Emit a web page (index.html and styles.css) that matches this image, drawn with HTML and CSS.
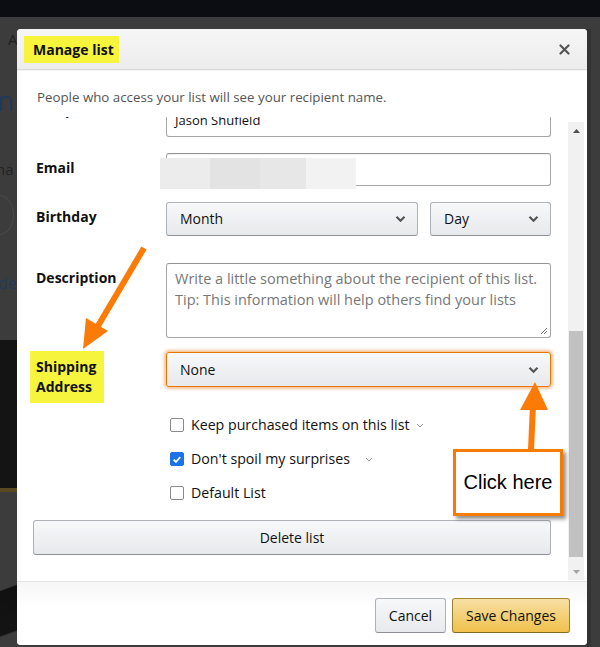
FILE: index.html
```html
<!DOCTYPE html>
<html lang="en">
<head>
<meta charset="utf-8">
<title>Manage list</title>
<link rel="stylesheet" href="styles.css">
</head>
<body>
<div class="page">
  <div class="topbar"></div>
  <div class="stage">
    <aside class="bg-left">
      <span class="bg-a">A</span>
      <span class="bg-n">n</span>
      <span class="bg-ha">ha</span>
      <span class="bg-circle"></span>
      <span class="bg-de">de</span>
      <span class="bg-img"></span>
      <span class="bg-gold"></span>
      <span class="bg-img2"></span>
    </aside>

    <section class="modal">
      <header class="modal-head">
        <h1 class="title"><span class="hl">Manage list</span></h1>
        <span class="close">
          <svg width="11" height="11" viewBox="0 0 11 11"><path d="M1.5 1.5 L9.5 9.5 M9.5 1.5 L1.5 9.5" stroke="#555" stroke-width="2.2" stroke-linecap="round"/></svg>
        </span>
      </header>

      <p class="notice">People who access your list will see your recipient name.</p>

      <div class="scroller">
        <div class="form">
          <div class="row row-first">
            <label class="lbl">Recipient</label>
            <div class="input">Jason Shufield</div>
          </div>

          <div class="row">
            <label class="lbl">Email</label>
            <div class="input input-email"></div>
          </div>

          <div class="row">
            <label class="lbl">Birthday</label>
            <div class="pair">
              <div class="select sel-month"><span>Month</span><svg class="chev" width="11" height="8" viewBox="0 0 11 8"><path d="M1.5 1.8 L5.5 5.8 L9.5 1.8" fill="none" stroke="#555" stroke-width="2.2"/></svg></div>
              <div class="select sel-day"><span>Day</span><svg class="chev" width="11" height="8" viewBox="0 0 11 8"><path d="M1.5 1.8 L5.5 5.8 L9.5 1.8" fill="none" stroke="#555" stroke-width="2.2"/></svg></div>
            </div>
          </div>

          <div class="row row-desc">
            <label class="lbl">Description</label>
            <div class="textarea">
              <span class="ph">Write a little something about the recipient of this list.<br>Tip: This information will help others find your lists</span>
              <svg class="grip" width="9" height="9" viewBox="0 0 9 9"><path d="M8 2 L2 8 M8 5 L5 8" stroke="#777" stroke-width="1"/></svg>
            </div>
          </div>

          <div class="row row-ship">
            <label class="lbl lbl-ship"><span class="hl hl-ship">Shipping<br>Address</span></label>
            <div class="select sel-ship"><span>None</span><svg class="chev" width="11" height="8" viewBox="0 0 11 8"><path d="M1.5 1.8 L5.5 5.8 L9.5 1.8" fill="none" stroke="#555" stroke-width="2.2"/></svg></div>
          </div>

          <div class="row row-opts">
            <span></span>
            <div class="opts">
              <div class="opt"><span class="cb"></span><span>Keep purchased items on this list</span><svg class="mini" width="8" height="5" viewBox="0 0 8 5"><path d="M1 1 L4 4 L7 1" fill="none" stroke="#999" stroke-width="1"/></svg></div>
              <div class="opt"><span class="cb cb-on"><svg width="13" height="13" viewBox="0 0 13 13"><path d="M3 6.8 L5.4 9.2 L10 3.8" fill="none" stroke="#fff" stroke-width="2"/></svg></span><span>Don't spoil my surprises</span><svg class="mini mini-far" width="8" height="5" viewBox="0 0 8 5"><path d="M1 1 L4 4 L7 1" fill="none" stroke="#999" stroke-width="1"/></svg></div>
              <div class="opt"><span class="cb"></span><span>Default List</span></div>
            </div>
          </div>

          <div class="btn btn-delete">Delete list</div>
        </div>

        <div class="scrollbar">
          <span class="sb-arrow"><svg width="7" height="4" viewBox="0 0 7 4"><path d="M0 4 L3.5 0 L7 4Z" fill="#505050"/></svg></span>
          <div class="sb-track"><div class="sb-thumb"></div></div>
          <span class="sb-arrow"><svg width="7" height="4" viewBox="0 0 7 4"><path d="M0 0 L3.5 4 L7 0Z" fill="#a3a3a3"/></svg></span>
        </div>
      </div>

      <footer class="modal-foot">
        <div class="btn btn-cancel">Cancel</div>
        <div class="btn btn-save">Save Changes</div>
      </footer>
    </section>

    <aside class="bg-right"></aside>
  </div>

  <svg class="annot" width="600" height="647" viewBox="0 0 600 647">
    <path d="M144 248 L95 331" stroke="#fb7b06" stroke-width="6" stroke-linecap="butt"/>
    <path d="M83 349 L86 318 L108 331 Z" fill="#fb7b06"/>
    <path d="M531 450 L533 405" stroke="#fb7b06" stroke-width="6"/>
    <path d="M535 382 L520 410 L548 410 Z" fill="#fb7b06"/>
  </svg>
  <div class="callout">Click here</div>
</div>
</body>
</html>
```

FILE: styles.css
```css
* { box-sizing: border-box; }
html, body { margin: 0; padding: 0; }
body {
  width: 600px;
  height: 647px;
  overflow: hidden;
  background: #3c3c3c;
  font-family: "Open Sans", "Liberation Sans", sans-serif;
  color: #111;
}
.page { position: relative; width: 600px; height: 647px; overflow: hidden; }
.topbar { height: 17px; background: #0b0d12; }
.stage { display: flex; height: 630px; padding-top: 12px; }

.bg-left { position: relative; width: 17px; flex: none; margin-top: -12px; overflow: hidden; }
.bg-left span { position: absolute; }
.bg-a { left: 8px; top: 12px; color: #1f1f1f; font-size: 15px; }
.bg-n { left: -3px; top: 68px; color: #223a5a; font-size: 28px; line-height: 30px; }
.bg-ha { left: -4px; top: 142px; color: #222; font-size: 15px; }
.bg-circle { left: -16px; top: 178px; width: 30px; height: 40px; border: 1px solid #4a4a4a; border-radius: 50%; }
.bg-de { left: -2px; top: 255px; color: #223a5a; font-size: 16px; }
.bg-img { left: 0; top: 323px; width: 17px; height: 148px; background: #141414; }
.bg-gold { left: 0; top: 471px; width: 17px; height: 4px; background: #5a4a22; }
.bg-img2 { left: 0; top: 558px; width: 17px; height: 70px; background: linear-gradient(160deg, #3c3c3c 20%, #101010 22%, #141414 80%, #3c3c3c 82%); }

.bg-right { flex: 1; background: linear-gradient(90deg, #333 0, #333 4px, #3c3c3c 4px); }

.modal {
  width: 570px;
  height: 616px;
  flex: none;
  background: #fff;
  border-radius: 4px;
  display: flex;
  flex-direction: column;
  overflow: hidden;
}
.modal-head {
  height: 41px;
  flex: none;
  display: flex;
  align-items: center;
  justify-content: space-between;
  padding: 0 17px 0 7px;
  background: linear-gradient(#f6f6f6, #ececec);
  border-bottom: 1px solid #d9d9d9;
  box-shadow: 0 1px 0 #f3f3f3;
}
.title { margin: 0; font-size: 14px; font-weight: 700; line-height: 20px; color: #111; }
.hl { background: #f6f43c; }
.title .hl { display: inline-block; padding: 4px 5px 3px 9px; line-height: 20px; }
.close { display: flex; width: 11px; height: 11px; }

.notice {
  margin: 0;
  padding: 17px 20px 10px;
  font-size: 13.3px;
  line-height: 20px;
  color: #555;
  flex: none;
}

.scroller { flex: 1; display: flex; overflow: hidden; min-height: 0; }
.form { flex: 1; padding: 0 17px 0 16px; margin-top: -14px; }
.row { display: grid; grid-template-columns: 133px 1fr; margin-top: 16px; }
.row-first { margin-top: 0; }
.row-first .lbl { padding-top: 0; margin-top: -3px; }
.row-desc { margin-top: 27px; }
.row-ship { margin-top: 14px; }
.row-opts { margin-top: 28px; }

.lbl {
  padding: 5px 0 0 3px;
  font-size: 14px;
  font-weight: 700;
  line-height: 20px;
  color: #111;
}
.lbl-ship { height: 35px; }
.hl-ship { display: inline-block; margin: -6px 0 0 -6px; padding: 6px 8px 6px 6px; }

.input {
  height: 34px;
  border: 1px solid #a6a6a6;
  border-top-color: #949494;
  border-radius: 3px;
  box-shadow: inset 0 1px 0 rgba(0,0,0,.05);
  padding: 6px 8px;
  font-size: 13px;
  line-height: 20px;
  color: #111;
  background: #fff;
}
.input-email { height: 33px; position: relative; }
.input-email::before {
  content: "";
  position: absolute;
  left: -7px;
  top: 4px;
  width: 196px;
  height: 31px;
  background: linear-gradient(90deg, #ececec 0 50px, #e3e3e3 50px 100px, #e7e7e7 100px 146px, #f2f2f2 146px);
}

.pair { display: flex; gap: 12px; }
.select {
  height: 34px;
  display: flex;
  align-items: center;
  justify-content: space-between;
  padding: 0 11px 0 13px;
  border: 1px solid #adb1b8;
  border-bottom-color: #8d9096;
  border-radius: 3px;
  background: linear-gradient(#f7f8fa, #e7e9ec);
  box-shadow: inset 0 1px 0 rgba(255,255,255,.6);
  font-size: 14px;
  line-height: 20px;
  color: #111;
}
.sel-month { width: 252px; }
.sel-day { flex: 1; }
.sel-ship {
  height: 35px;
  border-color: #e77600;
  box-shadow: 0 0 3px 2px rgba(228,121,17,.45);
}
.chev { display: block; }

.textarea {
  position: relative;
  height: 75px;
  border: 1px solid #a6a6a6;
  border-top-color: #949494;
  border-radius: 3px;
  padding: 4px 8px;
  font-size: 14.5px;
  line-height: 21px;
  color: #777;
  white-space: nowrap;
}
.grip { position: absolute; right: 2px; bottom: 2px; }

.opts { display: flex; flex-direction: column; gap: 14px; padding-left: 4px; }
.opt { display: flex; align-items: center; gap: 7px; height: 20px; font-size: 14.2px; line-height: 20px; color: #111; }
.cb {
  width: 14px;
  height: 14px;
  border: 1px solid #8a8a8a;
  border-radius: 2px;
  background: #fff;
  flex: none;
  display: flex;
}
.cb-on { background: #1a73e8; border-color: #1a73e8; }
.mini { margin-left: -1px; }
.mini-far { margin-left: 8px; }

.btn {
  height: 35px;
  display: flex;
  align-items: center;
  justify-content: center;
  border: 1px solid #adb1b8;
  border-bottom-color: #8d9096;
  border-radius: 3px;
  background: linear-gradient(#f7f8fa, #e7e9ec);
  font-size: 14px;
  color: #111;
}
.btn-delete { margin-top: 17px; }

.scrollbar {
  width: 16px;
  flex: none;
  margin: 5px 3px 1px 0;
  background: #f1f1f1;
  display: flex;
  flex-direction: column;
}
.sb-arrow { height: 17px; display: flex; align-items: center; justify-content: center; flex: none; }
.sb-track { flex: 1; display: flex; flex-direction: column; justify-content: flex-end; padding: 0 1px 6px; }
.sb-thumb { height: 226px; background: #c1c1c1; }

.modal-foot {
  height: 64px;
  flex: none;
  display: flex;
  justify-content: flex-end;
  align-items: flex-start;
  gap: 6px;
  padding: 16px 17px 0 0;
  border-top: 1px solid #e3e3e3;
  background: linear-gradient(#f6f6f6, #fff 40%);
}
.btn-cancel { width: 71px; }
.btn-save {
  width: 118px;
  background: linear-gradient(#f7dfa5, #f0c14b);
  border-color: #a88734 #9c7e31 #846a29;
}

.annot { position: absolute; left: 0; top: 0; pointer-events: none; }
.callout {
  position: absolute;
  left: 453px;
  top: 449px;
  width: 110px;
  height: 67px;
  border: 3px solid #f57c00;
  background: #fff;
  box-shadow: 3px 3px 4px rgba(0,0,0,.45);
  display: flex;
  align-items: center;
  justify-content: center;
  font-family: "Liberation Sans", Arial, sans-serif;
  font-size: 20px;
  color: #000;
}
```
